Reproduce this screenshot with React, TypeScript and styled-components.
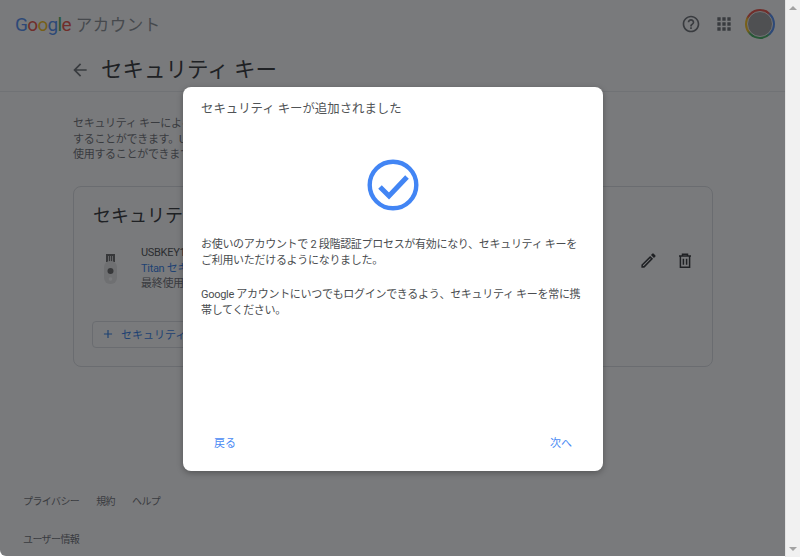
import React from 'react';
import styled, { createGlobalStyle } from 'styled-components';
import { MdAdd, MdApps, MdArrowBack, MdHelpOutline, MdOutlineEdit } from 'react-icons/md';

const GlobalStyle = createGlobalStyle`
  html, body {
    margin: 0;
    height: 100%;
    overflow: hidden;
    background: #fff;
  }
  body {
    font-family: Roboto, "Noto Sans CJK JP", sans-serif;
    color: #3c4043;
  }
`;

const Viewport = styled.div`
  display: flex;
  height: 100vh;
`;

const Page = styled.div`
  position: relative;
  flex: 1;
  min-width: 0;
  overflow: hidden;
`;

const TopBar = styled.header`
  display: flex;
  align-items: center;
  justify-content: space-between;
  height: 48px;
  padding: 0 10px 0 15px;
`;

const Brand = styled.div`
  display: flex;
  align-items: center;
  gap: 5px;
`;

const Logo = styled.span`
  font-size: 19px;
  letter-spacing: -0.7px;
`;

const LogoLetter = styled.span<{ $color: string }>`
  color: ${props => props.$color};
`;

const BrandName = styled.span`
  font-size: 16.5px;
  letter-spacing: 0.5px;
  color: #80868b;
`;

const TopActions = styled.div`
  display: flex;
  align-items: center;
  gap: 13px;
  color: #5f6368;
`;

const AvatarRing = styled.div`
  width: 30px;
  height: 30px;
  margin-left: -2px;
  box-sizing: border-box;
  padding: 2px;
  border-radius: 50%;
  background: conic-gradient(#ea4335 0 10%, #4285f4 14% 36%, #34a853 41% 62%, #fbbc05 67% 80%, #ea4335 85% 100%);
`;

const AvatarFace = styled.div`
  width: 100%;
  height: 100%;
  box-sizing: border-box;
  border-radius: 50%;
  background: #969696;
  border: 1.5px solid #eee;
`;

const TitleBar = styled.div`
  display: flex;
  align-items: center;
  gap: 11px;
  height: 43px;
  padding-left: 70px;
  border-bottom: 1px solid #e8eaed;
  color: #5f6368;
`;

const PageTitle = styled.h1`
  margin: 0;
  padding-bottom: 5px;
  font-size: 21.5px;
  font-weight: 400;
  color: #202124;
`;

const Content = styled.main`
  padding: 24px 72px 0 73px;
`;

const Intro = styled.p`
  margin: 0 0 23px;
  max-width: 500px;
  font-size: 11px;
  letter-spacing: -0.3px;
  line-height: 15.5px;
  color: #5f6368;
`;

const Card = styled.section`
  box-sizing: border-box;
  width: 640px;
  height: 181px;
  padding: 18px 19px;
  border: 1px solid #dadce0;
  border-radius: 8px;
`;

const CardTitle = styled.h2`
  margin: 0 0 18px;
  font-size: 18px;
  line-height: 22px;
  font-weight: 400;
  color: #202124;
`;

const KeyRow = styled.div`
  display: flex;
  align-items: center;
  height: 48px;
`;

const KeyIcon = styled.svg`
  flex: none;
  width: 13px;
  height: 30px;
  margin: 0 24px 0 11px;
`;

const KeyInfo = styled.div`
  flex: 1;
  font-size: 11px;
  letter-spacing: -0.3px;
  line-height: 15.5px;
  color: #5f6368;
`;

const KeyName = styled.div`
  color: #3c4043;
`;

const KeyLink = styled.div`
  color: #1a73e8;
`;

const KeyActions = styled.div`
  display: flex;
  align-items: center;
  gap: 19px;
  margin-bottom: 16px;
  color: #202124;
`;

const AddButton = styled.button`
  display: flex;
  align-items: center;
  gap: 6px;
  width: 240px;
  height: 27px;
  margin: 28px 0 0 -1px;
  padding: 0 8px;
  border: 1px solid #dadce0;
  border-radius: 4px;
  background: #fff;
  font: inherit;
  font-size: 11px;
  color: #1a73e8;
`;

const Footer = styled.footer`
  padding: 127px 0 0 23px;
  font-size: 10px;
  letter-spacing: -0.6px;
  color: #5f6368;
`;

const FooterLinks = styled.nav`
  display: flex;
  gap: 17px;
  height: 37px;
  line-height: 16px;
`;

const Overlay = styled.div`
  position: absolute;
  inset: 0 0 1px 0;
  display: flex;
  align-items: center;
  justify-content: center;
  background: rgba(32, 33, 36, 0.6);
  border-bottom-left-radius: 6px;
`;

const Dialog = styled.div`
  display: flex;
  flex-direction: column;
  box-sizing: border-box;
  width: 420px;
  height: 384px;
  margin: 1px 0 0 1px;
  padding: 13px 18px 19px;
  background: #fff;
  border-radius: 8px;
  box-shadow: 0 2px 6px rgba(0, 0, 0, 0.3);
`;

const DialogTitle = styled.h2`
  margin: 0 0 41px;
  font-size: 12.4px;
  line-height: 18px;
  font-weight: 400;
  color: #505356;
`;

const SuccessIcon = styled.svg`
  align-self: center;
  width: 52px;
  height: 52px;
  margin-bottom: 26px;
`;

const Message = styled.p`
  margin: 0 0 18px;
  font-size: 11px;
  letter-spacing: -0.3px;
  line-height: 16px;
  color: #4a4d50;
`;

const DialogActions = styled.div`
  display: flex;
  justify-content: space-between;
  margin-top: auto;
  padding: 0 13px;
`;

const TextButton = styled.button`
  padding: 0;
  border: 0;
  background: none;
  font: inherit;
  font-size: 11px;
  line-height: 16px;
  color: #4a8af4;
`;

const Scrollbar = styled.aside`
  display: flex;
  flex: none;
  flex-direction: column;
  justify-content: space-between;
  align-items: center;
  width: 15px;
  padding: 6px 0;
  box-sizing: border-box;
  background: #f1f1f1;
  border-left: 1px solid #e4e4e4;
`;

const ScrollArrow = styled.span<{ $down?: boolean }>`
  width: 0;
  height: 0;
  border-left: 4px solid transparent;
  border-right: 4px solid transparent;
  ${props => props.$down ? 'border-top: 4px solid #a3a3a3;' : 'border-bottom: 4px solid #a3a3a3;'}
`;

const logoLetters: [string, string][] = [
  ['G', '#4285f4'],
  ['o', '#ea4335'],
  ['o', '#fbbc05'],
  ['g', '#4285f4'],
  ['l', '#34a853'],
  ['e', '#ea4335'],
];

const TrashIcon = () => (
  <svg width="16" height="16" viewBox="0 0 16 16" fill="none" stroke="currentColor" strokeWidth="1.5">
    <path d="M2 3h12M5.5 3V1.2h5V3M3.4 3v11.3h9.2V3M6.4 5.8v6M9.6 5.8v6" />
  </svg>
);

const App: React.FC = () => {
  return (
    <Viewport>
      <GlobalStyle />
      <Page>
        <TopBar>
          <Brand>
            <Logo>
              {logoLetters.map(([letter, color], index) => (
                <LogoLetter key={index} $color={color}>{letter}</LogoLetter>
              ))}
            </Logo>
            <BrandName>アカウント</BrandName>
          </Brand>
          <TopActions>
            <MdHelpOutline size={20} />
            <MdApps size={20} />
            <AvatarRing>
              <AvatarFace />
            </AvatarRing>
          </TopActions>
        </TopBar>
        <TitleBar>
          <MdArrowBack size={20} />
          <PageTitle>セキュリティ キー</PageTitle>
        </TitleBar>
        <Content>
          <Intro>
            セキュリティ キーによる 2 段階認証でアカウントを保護<br />
            することができます。USB または Bluetooth で接続して<br />
            使用することができます。
          </Intro>
          <Card>
            <CardTitle>セキュリティ キー</CardTitle>
            <KeyRow>
              <KeyIcon viewBox="0 0 13 30">
                <rect x="2" y="0" width="9" height="8" fill="#5a5a5a" />
                <path d="M4.5 2v6M6.5 2v6M8.5 2v6" stroke="#fff" strokeWidth="0.7" />
                <rect x="0" y="7" width="13" height="23" rx="6" fill="#e6e6e6" />
                <circle cx="6.5" cy="17" r="3" fill="#5a5a5a" />
                <circle cx="6.5" cy="25" r="1.8" fill="#fff" />
              </KeyIcon>
              <KeyInfo>
                <KeyName>USBKEY1</KeyName>
                <KeyLink>Titan セキュリティ キー</KeyLink>
                <div>最終使用: 今日</div>
              </KeyInfo>
              <KeyActions>
                <MdOutlineEdit size={19} />
                <TrashIcon />
              </KeyActions>
            </KeyRow>
            <AddButton>
              <MdAdd size={14} />
              セキュリティ キーを追加
            </AddButton>
          </Card>
        </Content>
        <Footer>
          <FooterLinks>
            <span>プライバシー</span>
            <span>規約</span>
            <span>ヘルプ</span>
          </FooterLinks>
          <div>ユーザー情報</div>
        </Footer>
        <Overlay>
          <Dialog>
            <DialogTitle>セキュリティ キーが追加されました</DialogTitle>
            <SuccessIcon viewBox="0 0 52 52" fill="none" stroke="#4285f4">
              <circle cx="26" cy="26" r="23.3" strokeWidth="4.4" />
              <path d="M13 28l9 9 18-19" strokeWidth="5" />
            </SuccessIcon>
            <Message>お使いのアカウントで 2 段階認証プロセスが有効になり、セキュリティ キーをご利用いただけるようになりました。</Message>
            <Message>Google アカウントにいつでもログインできるよう、セキュリティ キーを常に携帯してください。</Message>
            <DialogActions>
              <TextButton>戻る</TextButton>
              <TextButton>次へ</TextButton>
            </DialogActions>
          </Dialog>
        </Overlay>
      </Page>
      <Scrollbar>
        <ScrollArrow />
        <ScrollArrow $down />
      </Scrollbar>
    </Viewport>
  );
};

export default App;
